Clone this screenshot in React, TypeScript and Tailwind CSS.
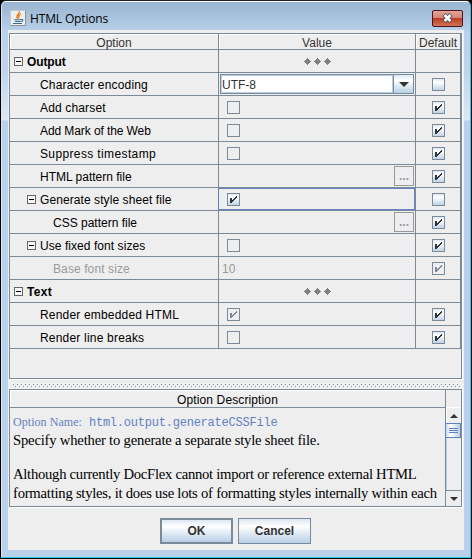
import React from "react";

const LINE = "border-[#7a8a99]";

function Check({ on, disabled, flat }: { on?: boolean; disabled?: boolean; flat?: boolean }) {
  return (
    <span
      className={`block h-[13px] w-[13px] shrink-0 border border-[#7a8a99] ${
        flat || disabled ? "bg-[#eeeeee]" : "bg-linear-to-b from-[#dce8f3] via-white via-30% to-[#bed3e6]"
      }`}
    >
      {on && (
        <svg className="block" width="11" height="11" viewBox="0 0 11 11" shapeRendering="crispEdges" fill={disabled ? "#7a8a99" : "#333333"}>
          <path d="M2 4h2v5h-2zM4 6h1v2h-1zM5 5h1v2h-1zM6 4h1v2h-1zM7 3h1v2h-1zM8 2h1v2h-1z" />
        </svg>
      )}
    </span>
  );
}

function Minus() {
  return (
    <span className="mr-1 flex h-[9px] w-[9px] shrink-0 items-center justify-center border border-[#666666] bg-[#f6f6f6]">
      <span className="h-px w-[5px] bg-black" />
    </span>
  );
}

function Dots() {
  return (
    <svg className="mx-auto mt-px" width="27" height="7" viewBox="0 0 27 7" shapeRendering="crispEdges" fill="#808080">
      {[0, 10, 20].map((x) => (
        <path key={x} transform={`translate(${x} 0)`} d="M3 0h1v1h1v1h1v1h1v1h-1v1h-1v1h-1v1h-1v-1h-1v-1h-1v-1h-1v-1h1v-1h1v-1h1z" />
      ))}
    </svg>
  );
}

function Combo() {
  return (
    <div className="ml-px flex h-5 w-[194px] border border-[#7a8a99] bg-white">
      <div className="flex-1 border border-[#b8cfe5] leading-[18px] text-[#333]">UTF-8</div>
      <div className="flex w-5 items-center justify-center border-l border-[#7a8a99] bg-linear-to-b from-[#dce8f3] via-white via-30% to-[#b8cfe5]">
        <svg width="10" height="5" viewBox="0 0 10 5" fill="#333"><path d="M0 0h10L5 5z" /></svg>
      </div>
    </div>
  );
}

function Browse() {
  return (
    <div className="mr-px ml-auto h-5 w-5 border border-[#999] text-center leading-[18px] font-bold text-[#999]">...</div>
  );
}

type Row = {
  label: string;
  pad: string;
  ls?: string;
  tree?: boolean;
  group?: boolean;
  dim?: boolean;
  focus?: boolean;
  value: React.ReactNode;
  def?: React.ReactNode;
};

const on = <Check on />;
const flat = <div className="pl-2"><Check flat /></div>;

const rows: Row[] = [
  { label: "Output", pad: "pl-1", ls: "tracking-[-0.1px]", tree: true, group: true, value: <Dots /> },
  { label: "Character encoding", pad: "pl-[30px]", ls: "tracking-[0.18px]", value: <Combo />, def: <Check /> },
  { label: "Add charset", pad: "pl-[30px]", ls: "tracking-[0.15px]", value: flat, def: on },
  { label: "Add Mark of the Web", pad: "pl-[30px]", ls: "tracking-[-0.09px]", value: flat, def: on },
  { label: "Suppress timestamp", pad: "pl-[30px]", ls: "tracking-[0.37px]", value: flat, def: on },
  { label: "HTML pattern file", pad: "pl-[30px]", value: <Browse />, def: on },
  { label: "Generate style sheet file", pad: "pl-[17px]", ls: "tracking-[0.08px]", tree: true, focus: true, value: <div className="pl-2"><Check on /></div>, def: <Check /> },
  { label: "CSS pattern file", pad: "pl-[43px]", value: <Browse />, def: on },
  { label: "Use fixed font sizes", pad: "pl-[17px]", ls: "tracking-[0.06px]", tree: true, value: flat, def: on },
  { label: "Base font size", pad: "pl-[43px]", ls: "tracking-[0.1px]", dim: true, value: <span className="pt-px pl-[3px] text-[#999]">10</span>, def: <Check on disabled /> },
  { label: "Text", pad: "pl-1", ls: "tracking-[0.3px]", tree: true, group: true, value: <Dots /> },
  { label: "Render embedded HTML", pad: "pl-[30px]", ls: "tracking-[0.18px]", value: <div className="pl-2"><Check on disabled /></div>, def: on },
  { label: "Render line breaks", pad: "pl-[30px]", ls: "tracking-[0.2px]", value: flat, def: on },
];

function TableRow({ r }: { r: Row }) {
  return (
    <div className="flex h-[23px]">
      <div className={`flex w-[209px] items-center border-r border-b ${LINE} ${r.pad} ${r.group ? "font-bold" : ""} ${r.dim ? "text-[#999]" : ""}`}>
        {r.tree && <Minus />}
        <span className={`pt-[2px] whitespace-nowrap ${r.ls ?? ""}`}>{r.label}</span>
      </div>
      <div className={`relative flex w-[197px] items-center border-r border-b ${LINE}`}>
        {r.focus && <span className="absolute inset-0 -left-px border border-[#6382bf]" />}
        {r.value}
      </div>
      <div className={`flex w-[45px] items-center border-r border-b pl-4 ${LINE}`}>{r.def}</div>
    </div>
  );
}

function JavaIcon() {
  return (
    <svg width="16" height="16" viewBox="0 0 16 16">
      <rect x=".5" y=".5" width="15" height="15" rx="1" fill="#eceff0" stroke="#c3c9ce" />
      <path d="M.5 15.500h15v-15" fill="none" stroke="#87929c" />
      <path d="M9 1.500C10.500 4 5.200 5 7.500 8.700M10.800 3.800C8 5.500 8.300 6.500 9.200 8.300" fill="none" stroke="#ee7d22" strokeWidth="1.500" />
      <path d="M4.300 9.700h6.700M5 11.500h5.500M3 13.500h9M11 9.500c2.700-.4 2.200 1.600 0 2.200" fill="none" stroke="#41688c" strokeWidth="1.100" />
    </svg>
  );
}

function Grip() {
  return (
    <svg className="block" width="449" height="5" shapeRendering="crispEdges">
      <defs>
        <pattern id="bumps" width="4" height="4" patternUnits="userSpaceOnUse">
          <path d="M0 0h1v1h-1zM2 2h1v1h-1z" fill="#fff" />
          <path d="M1 1h1v1h-1zM3 3h1v1h-1z" fill="#7a8a99" />
        </pattern>
      </defs>
      <rect width="449" height="5" fill="url(#bumps)" />
    </svg>
  );
}

function ScrollBar() {
  return (
    <div className="flex w-[15px] flex-col">
      <div className="h-[17px]" />
      <div className="flex h-4 items-center justify-center border-t border-l border-white">
        <svg width="8" height="4" viewBox="0 0 8 4" fill="#333"><path d="M0 4h8L4 0z" /></svg>
      </div>
      <div className="-ml-px flex h-[15px] flex-col items-center justify-center gap-px border border-[#6382bf] bg-linear-to-r from-[#c8dbed] via-white via-35% to-[#b8cfe5]">
        <span className="h-px w-[9px] bg-[#6382bf]" />
        <span className="h-px w-[9px] bg-[#6382bf]" />
        <span className="h-px w-[9px] bg-[#6382bf]" />
      </div>
      <div className="flex-1 border-l border-[#b8cfe5]" />
      <div className="flex h-4 items-center justify-center border-t border-[#7a8a99]">
        <svg width="8" height="4" viewBox="0 0 8 4" fill="#333"><path d="M0 0h8L4 4z" /></svg>
      </div>
    </div>
  );
}

export default function App() {
  return (
    <div className="h-[559px] w-[472px] overflow-hidden bg-black font-['Liberation_Sans',Arial,sans-serif] text-[12px] text-black">
      <div className="flex h-[558px] flex-col rounded-t-[6px] border-x border-t border-t-[#222] border-r-black border-l-black">
        <div className="flex h-full flex-col rounded-t-[5px] border border-t-white border-r-[#20cfee] border-b-[#20cfee] border-l-[#dce9f5] bg-[linear-gradient(#99b4d1_0px,#b9d1ea_30px,#bfd5ec_70px,#dce8f4_118px,#b9d1ea_119px)] px-[6px] pb-[7px]">
          <div className="flex h-7 shrink-0 items-center pt-[4px] pl-[2px]">
            <JavaIcon />
            <span className="ml-1 pt-px font-['Open_Sans','Noto_Sans',sans-serif] text-[12px] tracking-[-0.15px]">HTML Options</span>
            <div className="mr-[1px] ml-auto flex h-[17px] w-[31px] items-center justify-center rounded-[2px] border border-[#4a1420] bg-[linear-gradient(#e5a596_0%,#d58474_48%,#bc3d22_50%,#d27355_100%)]">
              <svg width="13" height="10" viewBox="0 0 13 10"><path d="M3 1.500l7 7M10 1.500l-7 7" stroke="#454a5c" strokeWidth="4.200" /><path d="M3.500 2l6 6M9.500 2l-6 6" stroke="#fff" strokeWidth="2.600" /></svg>
            </div>
          </div>
          <div className="flex flex-1 flex-col bg-[#eeeeee] pt-[3px] pl-px">
            <div className={`h-[346px] w-[453px] shrink-0 border shadow-[1px_1px_0_#fff] ${LINE}`}>
              <div className="flex h-4 text-center leading-[18px] text-[#333]">
                <div className={`w-[209px] border-r border-b shadow-[inset_1px_1px_0_#fff] ${LINE}`}>Option</div>
                <div className={`w-[197px] border-r border-b shadow-[inset_1px_1px_0_#fff] ${LINE}`}>Value</div>
                <div className={`w-[45px] border-r border-b shadow-[inset_1px_1px_0_#fff] ${LINE}`}>Default</div>
              </div>
              {rows.map((r) => <TableRow key={r.label} r={r} />)}
            </div>
            <div className="h-[10px] shrink-0 pt-1 pl-[3px]">
              <Grip />
            </div>
            <div className={`flex h-[118px] w-[453px] shrink-0 border shadow-[1px_1px_0_#fff] ${LINE}`}>
              <div className={`w-[437px] overflow-hidden border-r ${LINE}`}>
                <div className={`h-[18px] border-b text-center leading-[20px] tracking-[0.12px] shadow-[inset_1px_1px_0_#fff] ${LINE}`}>Option Description</div>
                <div className="pt-[5px] pl-[3px] font-['Liberation_Serif',serif] text-[14.67px] leading-[19px] whitespace-nowrap">
                  <div className="text-[12px] text-[#6382bf]"><span className="tracking-[0.05px]">Option Name:</span> <span className="ml-1 font-['Liberation_Mono',monospace] tracking-[-0.22px]">html.output.generateCSSFile</span></div>
                  <div className="-mt-[2px] tracking-[-0.2px]">Specify whether to generate a separate style sheet file.</div>
                  <div className="pt-[15px] tracking-[-0.27px]">Although currently DocFlex cannot import or reference external HTML</div>
                  <div className="tracking-[-0.24px]">formatting styles, it does use lots of formatting styles internally within each</div>
                </div>
              </div>
              <ScrollBar />
            </div>
            <div className="flex gap-[5px] pt-[11px] pl-[151px] text-center font-bold text-[#333]">
              <div className="h-[26px] w-[73px] border-2 border-[#7a8a99] bg-linear-to-b from-[#dce8f3] via-white via-30% to-[#b8cfe5] leading-[23px]">OK</div>
              <div className="h-[26px] w-[73px] border border-[#7a8a99] bg-linear-to-b from-[#dce8f3] via-white via-30% to-[#b8cfe5] leading-[25px]">Cancel</div>
            </div>
          </div>
        </div>
      </div>
    </div>
  );
}
